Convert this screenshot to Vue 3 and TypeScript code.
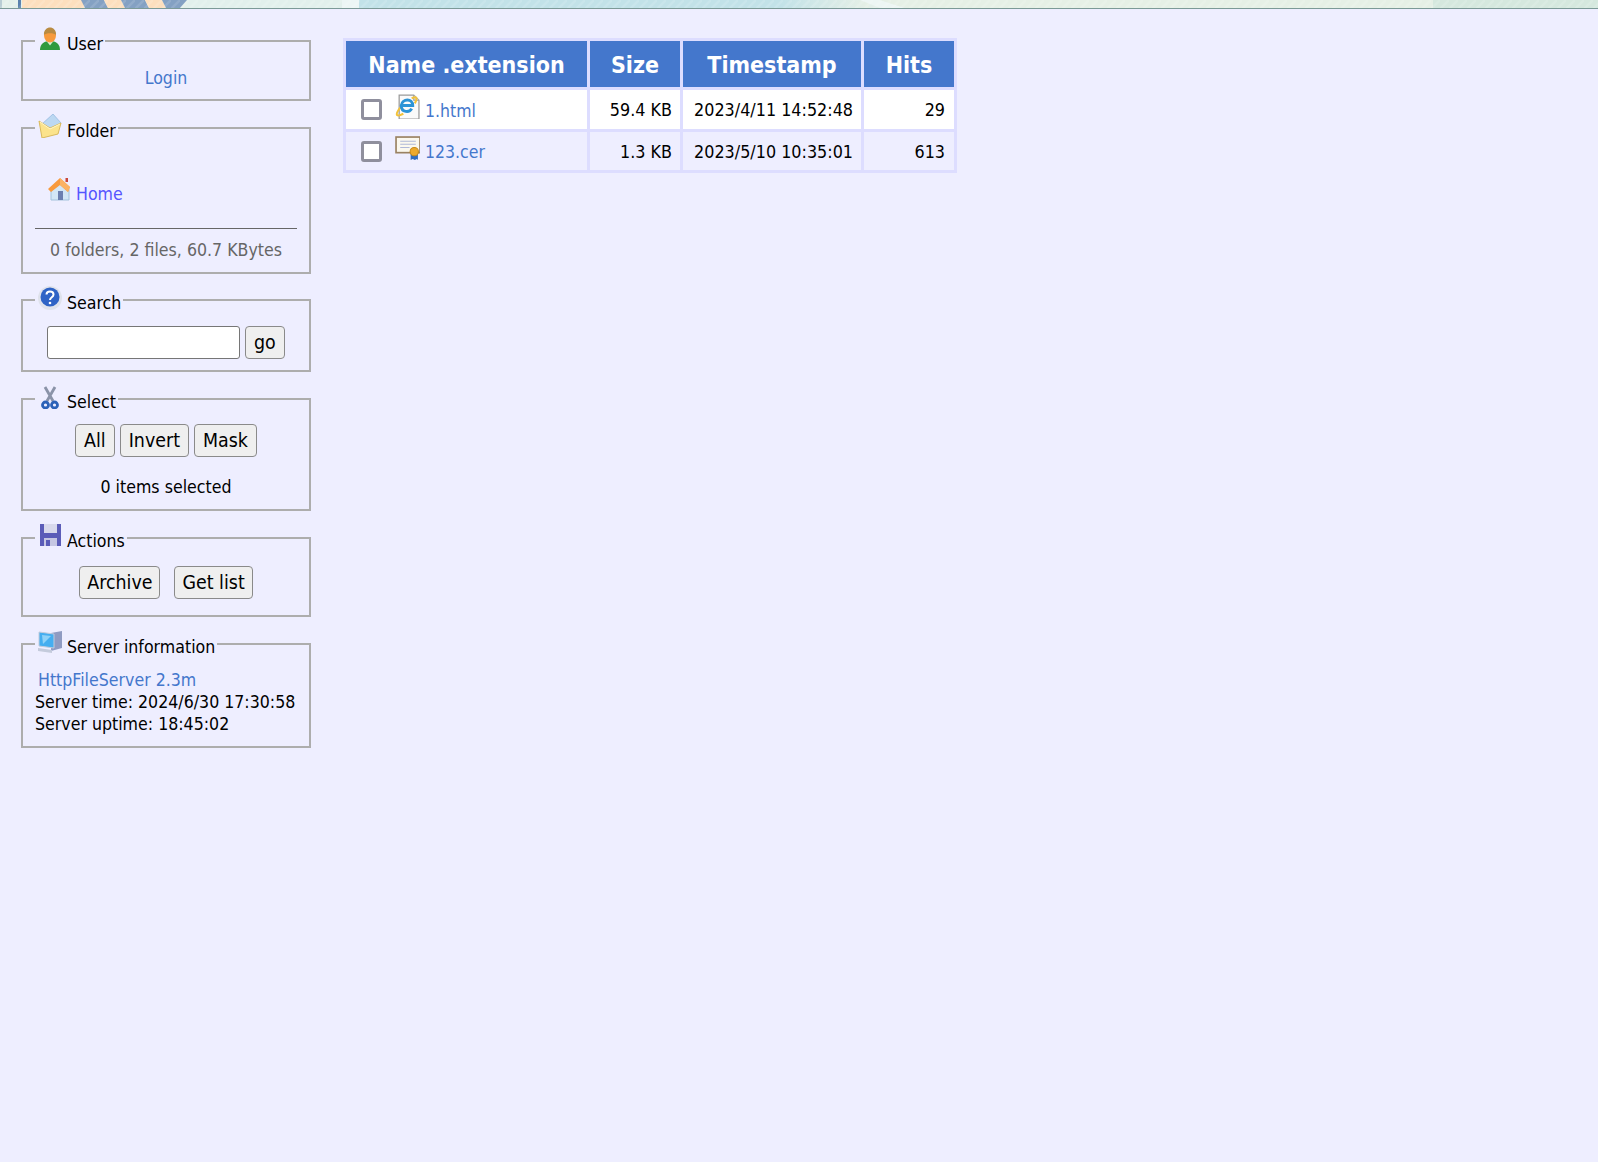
<script setup lang="ts">
interface FileRow {
  name: string
  kind: 'html' | 'cer'
  size: string
  time: string
  hits: number
}

const files: FileRow[] = [
  { name: '1.html', kind: 'html', size: '59.4 KB', time: '2023/4/11 14:52:48', hits: 29 },
  { name: '123.cer', kind: 'cer', size: '1.3 KB', time: '2023/5/10 10:35:01', hits: 613 },
]
</script>

<template>
  <div class="page">
    <header class="band">
      <svg width="1598" height="9" viewBox="0 0 1598 9" preserveAspectRatio="none">
        <defs>
          <pattern id="hatch" width="9" height="9" patternUnits="userSpaceOnUse">
            <path d="M0 9 L9 0" stroke="#fff" stroke-opacity=".12" stroke-width="2.5" />
          </pattern>
          <linearGradient id="fade" x1="0" x2="1" y1="0" y2="0">
            <stop offset="0" stop-color="#c2e2e8" />
            <stop offset="1" stop-color="#e6f0e6" />
          </linearGradient>
        </defs>
        <rect width="1598" height="9" fill="#e4f0ea" />
        <rect x="0" width="2" height="8" fill="#b9cdd4" />
        <rect x="18" width="3" height="8" fill="#5b82ad" />
        <rect x="22" width="62" height="8" fill="#fddfbe" />
        <polygon points="81,0 104,0 108,8 85,8" fill="#84a1c3" />
        <polygon points="104,0 121,0 125,8 108,8" fill="#fddfbe" />
        <polygon points="121,0 145,0 149,8 125,8" fill="#84a1c3" />
        <polygon points="145,0 162,0 166,8 149,8" fill="#fddfbe" />
        <polygon points="162,0 187,0 180,8 166,8" fill="#84a1c3" />
        <rect x="187" width="155" height="8" fill="#e2f0ec" />
        <rect x="342" width="17" height="8" fill="#ecf6f5" />
        <rect x="359" width="420" height="8" fill="#c2e2e8" />
        <rect x="779" width="90" height="8" fill="url(#fade)" />
        <polygon points="860,0 880,0 905,8 880,8" fill="#edf6f4" />
        <polygon points="880,0 1433,0 1433,8 905,8" fill="#e6f0e6" />
        <rect x="1433" width="165" height="8" fill="#d5e8de" />
        <rect width="1598" height="8" fill="url(#hatch)" />
        <rect y="8" width="1598" height="1" fill="#7c9a97" />
      </svg>
    </header>

    <main class="layout">
      <aside class="panel">
        <fieldset class="box box-user">
          <legend>
            <svg class="ico" viewBox="0 0 24 24">
              <path d="M2 23c0-6 4-9 10-9s10 3 10 9z" fill="#2f9a3e" />
              <path d="M8.500 14l3.500 4.500 3.500-4.500z" fill="#d8efd2" />
              <ellipse cx="12" cy="8.500" rx="6" ry="7" fill="#f79a3d" />
              <path d="M6 8c-.5-5 3-7.500 6-7.500s6.500 2.500 6 7.500c-2-2.500-10-2.500-12 0z" fill="#b98b42" />
            </svg>
            User
          </legend>
          <div class="center"><a href="#">Login</a></div>
        </fieldset>

        <fieldset class="box box-folder">
          <legend>
            <svg class="ico" viewBox="0 0 24 24">
              <path d="M4 10L15 0l8 9-11 11z" fill="#bcd8f2" stroke="#8fb5dc" stroke-width=".7" />
              <path d="M1 7l11 7 11-5-3 11L4 24z" fill="#fbe38c" stroke="#d9b95d" />
              <path d="M2 8l10 7 10-5" fill="none" stroke="#fff6c8" />
            </svg>
            Folder
          </legend>
          <div class="home">
            <svg class="ico" viewBox="0 0 24 24">
              <path d="M3 11l9-6 9 7v11H3z" fill="#d3e6f6" stroke="#a3c2dc" />
              <path d="M0 12L12 1l10 9-2 5-8-7-9 7z" fill="#f89a3d" />
              <path d="M12 1l10 9-2 5-8-7z" fill="#fbb264" />
              <rect x="17.500" y="1" width="2.500" height="4" fill="#c9473a" />
              <rect x="10" y="14" width="5" height="9" fill="#6c7fb0" />
            </svg>
            <a class="visited" href="#">Home</a>
          </div>
          <div class="stats">0 folders, 2 files, 60.7 KBytes</div>
        </fieldset>

        <fieldset class="box box-search">
          <legend>
            <svg class="ico" viewBox="0 0 24 24">
              <circle cx="12" cy="12" r="12" fill="#dfe2ec" />
              <circle cx="12" cy="11" r="9.500" fill="#2f63c6" />
              <path d="M8.500 8.500c0-4 7-4 7 0 0 3-3.500 2.500-3.500 5.500" fill="none" stroke="#fff" stroke-width="2" />
              <circle cx="12" cy="17" r="1.300" fill="#fff" />
            </svg>
            Search
          </legend>
          <div class="search-row">
            <input class="field" type="text" />
            <button class="btn">go</button>
          </div>
        </fieldset>

        <fieldset class="box box-select">
          <legend>
            <svg class="ico" viewBox="0 0 24 24">
              <path d="M7 2l8 14M17 2L9 16" stroke="#8a93a8" stroke-width="2.800" fill="none" />
              <circle cx="7.500" cy="20" r="3" fill="none" stroke="#2c62b8" stroke-width="2.800" />
              <circle cx="16.500" cy="20" r="3" fill="none" stroke="#2c62b8" stroke-width="2.800" />
            </svg>
            Select
          </legend>
          <div class="btn-row tight">
            <button class="btn">All</button>
            <button class="btn">Invert</button>
            <button class="btn">Mask</button>
          </div>
          <div class="center count">0 items selected</div>
        </fieldset>

        <fieldset class="box box-actions">
          <legend>
            <svg class="ico" viewBox="0 0 24 24">
              <path d="M2 0h21v22H2z" fill="#5b5cb8" />
              <rect x="6" y="0" width="13" height="9" fill="#d8d9ec" />
              <rect x="6" y="14" width="13" height="8" fill="#c5c6e2" />
              <rect x="8" y="16" width="4" height="6" fill="#5b5cb8" />
            </svg>
            Actions
          </legend>
          <div class="btn-row wide">
            <button class="btn">Archive</button>
            <button class="btn">Get list</button>
          </div>
        </fieldset>

        <fieldset class="box box-server">
          <legend>
            <svg class="ico" viewBox="0 0 24 24">
              <path d="M13 3l11-2v17l-11 3z" fill="#8f9bc2" />
              <path d="M1 2l15 2v14L1 16z" fill="#45aef0" stroke="#c3ccdc" />
              <path d="M4 5l9 1-8 8z" fill="#8fd2f8" />
              <path d="M0 18l14 2v3L0 21z" fill="#c4cbdc" />
            </svg>
            Server information
          </legend>
          <div class="line"><a href="#">HttpFileServer 2.3m</a></div>
          <div class="line">Server time: 2024/6/30 17:30:58</div>
          <div class="line">Server uptime: 18:45:02</div>
        </fieldset>
      </aside>

      <section class="content">
        <table class="files">
          <colgroup>
            <col class="c1" />
            <col class="c2" />
            <col class="c3" />
            <col class="c2" />
          </colgroup>
          <thead>
            <tr>
              <th>Name .extension</th>
              <th>Size</th>
              <th>Timestamp</th>
              <th>Hits</th>
            </tr>
          </thead>
          <tbody>
            <tr v-for="f in files" :key="f.name" :class="f.kind">
              <td class="name-cell">
                <div class="name">
                  <input class="check" type="checkbox" />
                  <svg v-if="f.kind === 'html'" class="ico file-ico" viewBox="0 0 24 24">
                    <path d="M4 1h14l5 5v18H4z" fill="#fafafa" stroke="#9a9a9a" stroke-width="1.200" />
                    <path d="M18 1v5h5" fill="#ddd" stroke="#9a9a9a" />
                    <path d="M5 13C-1 21 2 22 8 19M16 4c5-2 6 0 3 5" fill="none" stroke="#f2c23a" stroke-width="2" />
                    <path d="M6 11h11c0-7-10-7-11 0 0 7 8 7 10 3" fill="none" stroke="#2b93d6" stroke-width="2.800" />
                  </svg>
                  <svg v-else class="ico file-ico" viewBox="0 0 24 24">
                    <rect x="1" y="1" width="23" height="15" fill="#fbf8ee" stroke="#9a8263" stroke-width="1.600" />
                    <path d="M5 5h15M5 8h15M5 11h9" stroke="#b0b8d8" />
                    <path d="M15 17v6l2-1 2 1v-6zM19 17v6l2-1 1 1v-6z" fill="#2f6cc0" />
                    <circle cx="18.500" cy="15" r="4" fill="#eda92c" stroke="#c88a16" />
                  </svg>
                  <a href="#">{{ f.name }}</a>
                </div>
              </td>
              <td>{{ f.size }}</td>
              <td>{{ f.time }}</td>
              <td class="hits">{{ f.hits }}</td>
            </tr>
          </tbody>
        </table>
      </section>
    </main>
  </div>
</template>

<style>
html, body { background: #eef; }
</style>

<style scoped>
.page {
  min-height: 1162px;
  background: #eef;
  color: #000;
  font-family: "DejaVu Sans Condensed", "DejaVu Sans", sans-serif;
  font-stretch: condensed;
  font-size: 17.6px;
  line-height: 22px;
}
.band { height: 9px; overflow: hidden; }
.band svg { display: block; }
.layout {
  display: flex;
  gap: 32px;
  padding: 18px 0 0 21px;
  align-items: flex-start;
}
.panel { width: 290px; flex: none; }
a { color: #47c; text-decoration: none; }
a.visited { color: #55f; }
.ico { width: 24px; height: 24px; flex: none; }
.box {
  margin: 0 0 13px;
  padding: 0 12px;
  border: 2px solid #adadad;
  min-width: 0;
}
legend {
  display: flex;
  align-items: flex-end;
  gap: 5px;
  height: 28px;
  padding: 0 2px 0 3px;
  line-height: 22px;
}
legend .ico { margin-bottom: 4px; }
.center { text-align: center; }
.line { white-space: nowrap; }
.box-user { padding-top: 12px; padding-bottom: 10px; }
.box-folder { margin-bottom: 12px; padding-bottom: 11px; }
.home {
  display: flex;
  align-items: flex-start;
  gap: 4px;
  height: 51px;
  padding: 35px 0 0 13px;
}
.home a { margin-top: 6px; }
.stats {
  padding-top: 10px;
  border-top: 1px solid #666;
  text-align: center;
  color: #666;
}
.box-search { padding-top: 12px; padding-bottom: 11px; }
.search-row { display: flex; gap: 5px; padding-left: 12px; }
.field {
  width: 193px;
  height: 33px;
  box-sizing: border-box;
  border: 1px solid #767676;
  border-radius: 3px;
  background: #fff;
  padding: 0;
}
.btn {
  height: 33px;
  box-sizing: border-box;
  padding: 0 8px;
  border: 1px solid #8a8a8a;
  border-radius: 4px;
  background: #efefef;
  color: #000;
  font: inherit;
  font-size: 19.4px;
}
.btn-row { display: flex; justify-content: center; }
.tight { gap: 5px; }
.wide { gap: 14px; }
.wide .btn { padding: 0 7px; }
.box-select { padding-top: 11px; padding-bottom: 11px; }
.count { margin-top: 19px; }
.box-actions { padding-top: 14px; padding-bottom: 16px; }
.box-server { padding-top: 11px; padding-bottom: 11px; }
.box-server a { padding-left: 3px; }
.content { flex: none; padding-top: 11px; }
.files {
  width: 614px;
  table-layout: fixed;
  border-collapse: separate;
  border-spacing: 3px;
  background: #ddf;
  font-size: 17.8px;
}
.c1 { width: 241px; }
.c2 { width: 90px; }
.c3 { width: 178px; }
.files th {
  height: 46px;
  padding: 2px 0 0;
  box-sizing: border-box;
  background: #47c;
  color: #fff;
  font-size: 23px;
  font-weight: 700;
  text-align: center;
}
.files td {
  height: 38px;
  box-sizing: border-box;
  padding: 0 8px;
  text-align: right;
  vertical-align: middle;
}
.files td.hits { padding-right: 9px; }
.files tbody tr.html td { background: #fff; height: 39px; }
.files tbody tr.cer td { background: #eef; padding-top: 2px; }
.files td.name-cell { padding: 0 0 0 15px; text-align: left; }
.files tbody tr.cer td.name-cell { padding-top: 0; }
.name { display: flex; align-items: center; }
.check {
  appearance: none;
  width: 21px;
  height: 21px;
  margin: 0 13px 0 0;
  box-sizing: border-box;
  border: 3px solid #8f8f9d;
  border-radius: 3px;
  background: #fff;
}
.file-ico { width: 25px; height: 25px; margin-top: -6px; margin-right: 5px; }
.name a { margin-top: 2px; font-size: 17.5px; }
</style>
